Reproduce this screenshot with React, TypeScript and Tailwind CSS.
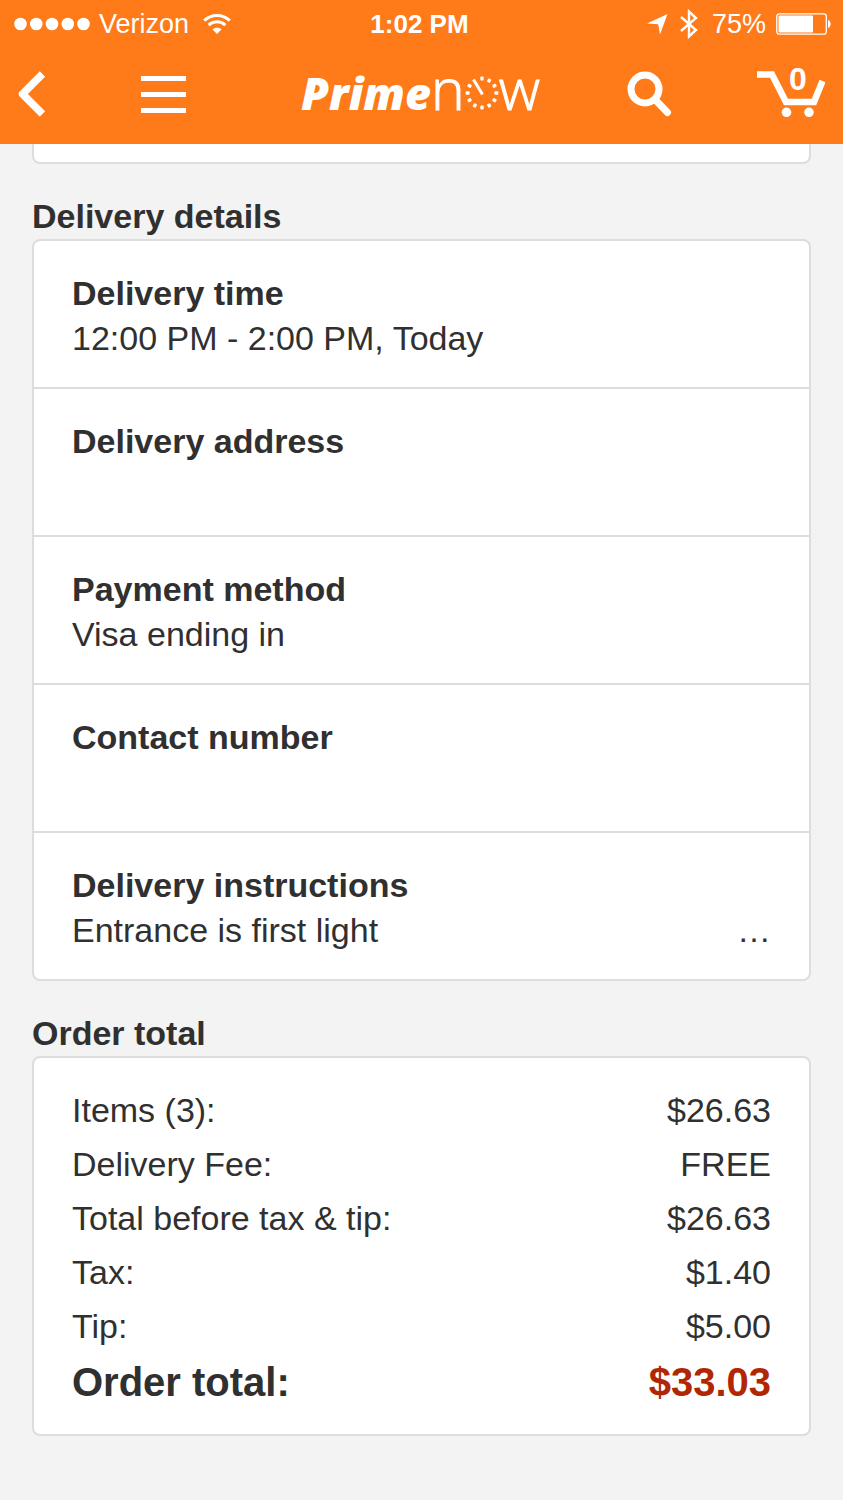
import type { ReactNode } from "react";

const details = [
  { label: "Delivery time", value: "12:00 PM - 2:00 PM, Today" },
  { label: "Delivery address", value: "" },
  { label: "Payment method", value: "Visa ending in" },
  { label: "Contact number", value: "" },
  { label: "Delivery instructions", value: "Entrance is first light", more: true },
];

const charges = [
  ["Items (3):", "$26.63"],
  ["Delivery Fee:", "FREE"],
  ["Total before tax & tip:", "$26.63"],
  ["Tax:", "$1.40"],
  ["Tip:", "$5.00"],
];

// One mark per hour; the minute hand takes the place of the mark at eleven.
const ticks = Array.from({ length: 12 }, (_, i) => i * 30).filter((a) => a !== 330);

function StatusBar() {
  return (
    <div className="grid grid-cols-[1fr_auto_1fr] items-center h-12 pl-2 pr-3 text-[27px] leading-none">
      <div className="flex items-center gap-2 pl-1.5">
        <svg className="w-[77px] h-3.5" viewBox="0 0 77 14" fill="currentColor" aria-hidden="true">
          {[6.5, 22.3, 38, 53.8, 69.5].map((cx) => (
            <circle key={cx} cx={cx} cy="7" r="6.3" />
          ))}
        </svg>
        <span>Verizon</span>
        <svg className="ml-1.5 w-7 h-5" viewBox="0 0 28 20" fill="none" stroke="currentColor" strokeWidth="3" aria-hidden="true">
          <path d="M1.2 6.6C8.5-.2 19.5-.2 26.8 6.6" />
          <path d="M5.6 11.1c4.8-4.4 12-4.4 16.8 0" />
          <path d="M14 20l-4.6-4.7c2.6-2.2 6.6-2.2 9.2 0z" fill="currentColor" stroke="none" />
        </svg>
      </div>
      <span className="text-[26px] leading-none font-bold">1:02 PM</span>
      <div className="flex items-center justify-end">
        <svg className="w-[21px] h-[21px]" viewBox="0 0 21 21" fill="currentColor" aria-hidden="true">
          <path d="M20.5 0L13 20.5 11.2 10.2 0 9.4z" />
        </svg>
        <svg className="ml-3 w-[18px] h-[30px]" viewBox="0 0 18 30" fill="none" stroke="currentColor" strokeWidth="2.4" aria-hidden="true">
          <path d="M1 8l15 13-7 6.5v-25L16 9 1 22" />
        </svg>
        <span className="ml-3.5">75%</span>
        <svg className="ml-2.5 w-[55px] h-[22px]" viewBox="0 0 55 22" aria-hidden="true">
          <rect x=".8" y=".8" width="49.5" height="20.4" rx="2.5" fill="none" stroke="currentColor" strokeWidth="1.3" />
          <rect x="2.5" y="2.5" width="34.5" height="17" rx="1" fill="currentColor" />
          <path d="M52 7c3.5.8 3.5 7.2 0 8z" fill="currentColor" />
        </svg>
      </div>
    </div>
  );
}

function Logo() {
  return (
    <a href="#home" aria-label="Prime Now" className="flex items-baseline pb-3 leading-none font-['Open_Sans',sans-serif]">
      <span className="text-[45px] leading-none font-extrabold italic">Prime</span>
      <span className="text-[57px] leading-none font-light [-webkit-text-stroke:1px_white]">n</span>
      <svg className="w-[34px] h-[34px]" viewBox="0 0 34 34" fill="currentColor" aria-hidden="true">
        {ticks.map((a) => (
          <rect key={a} x="15.3" y=".6" width="3.4" height="4" rx="1" transform={`rotate(${a} 17 17)`} />
        ))}
        <path d="M8.5 3.5L17.5 18.5" stroke="currentColor" strokeWidth="3" />
      </svg>
      <span className="text-[57px] leading-none font-light [-webkit-text-stroke:1px_white]">w</span>
    </a>
  );
}

function NavBar() {
  return (
    <nav className="grid grid-cols-[1fr_auto_1fr] items-center h-24 pl-4 pr-[18px] pb-1">
      <div className="flex items-center gap-[93px]">
        <button type="button" aria-label="Back">
          <svg className="block w-8 h-12" viewBox="0 0 32 48" fill="none" stroke="currentColor" strokeWidth="7.5" strokeLinejoin="round">
            <path d="M26.5 4L6.5 24l20 20" />
          </svg>
        </button>
        <button type="button" aria-label="Menu">
          <svg className="block w-[45px] h-[37px]" viewBox="0 0 45 37" fill="currentColor">
            <path d="M0 0h45v5H0zM0 16h45v5H0zM0 32h45v5H0z" />
          </svg>
        </button>
      </div>
      <Logo />
      <div className="flex items-center justify-end gap-[85px]">
        <button type="button" aria-label="Search">
          <svg className="block w-[45px] h-[46px]" viewBox="0 0 45 46" fill="none" stroke="currentColor" strokeWidth="7">
            <circle cx="18" cy="18" r="14" />
            <path d="M28.5 29l12 12.5" strokeLinecap="round" />
          </svg>
        </button>
        <button type="button" aria-label="Cart" className="relative">
          <svg className="block w-[68px] h-[46px]" viewBox="0 0 68 46" fill="none" stroke="currentColor">
            <path d="M0 3.5h15l14 27.5h28l8.5-21" strokeWidth="6.5" />
            <circle cx="29.5" cy="41.3" r="4.8" fill="currentColor" stroke="none" />
            <circle cx="52" cy="41.3" r="4.8" fill="currentColor" stroke="none" />
          </svg>
          <span className="absolute -top-2 left-8 text-[32px] leading-none font-bold">0</span>
        </button>
      </div>
    </nav>
  );
}

function Section({ title, children }: { title: string; children: ReactNode }) {
  return (
    <section className="mt-[30px]">
      <h2 className="font-bold">{title}</h2>
      <div className="rounded-lg border-2 border-[#dddddd] bg-white">{children}</div>
    </section>
  );
}

export default function App() {
  return (
    <div className="min-h-screen bg-[#f3f3f3] text-[#303030] font-['Liberation_Sans',Arial,sans-serif]">
      <header className="sticky top-0 z-10 bg-[#ff7a18] text-white">
        <StatusBar />
        <NavBar />
      </header>
      <main className="px-8 pb-16 text-[34px] leading-[45px]">
        <div className="h-5 rounded-b-lg border-2 border-t-0 border-[#dddddd] bg-white" />
        <Section title="Delivery details">
          <dl className="divide-y-2 divide-[#dddddd]">
            {details.map((d) => (
              <div key={d.label} className="px-[38px] pt-[30px] pb-[26px]">
                <dt className="font-bold">{d.label}</dt>
                <dd className="flex justify-between min-h-[45px]">
                  <span>{d.value}</span>
                  {d.more && <span>…</span>}
                </dd>
              </div>
            ))}
          </dl>
        </Section>
        <Section title="Order total">
          <div className="px-[38px] pt-[25px] pb-[23px]">
            <table className="w-full">
              <tbody>
                {charges.map(([label, amount]) => (
                  <tr key={label} className="h-[54px]">
                    <th scope="row" className="p-0 text-left font-normal">{label}</th>
                    <td className="p-0 text-right">{amount}</td>
                  </tr>
                ))}
                <tr className="h-[58px] text-[40px] font-bold">
                  <th scope="row" className="p-0 text-left">Order total:</th>
                  <td className="p-0 text-right text-[#b12704]">$33.03</td>
                </tr>
              </tbody>
            </table>
          </div>
        </Section>
      </main>
    </div>
  );
}
